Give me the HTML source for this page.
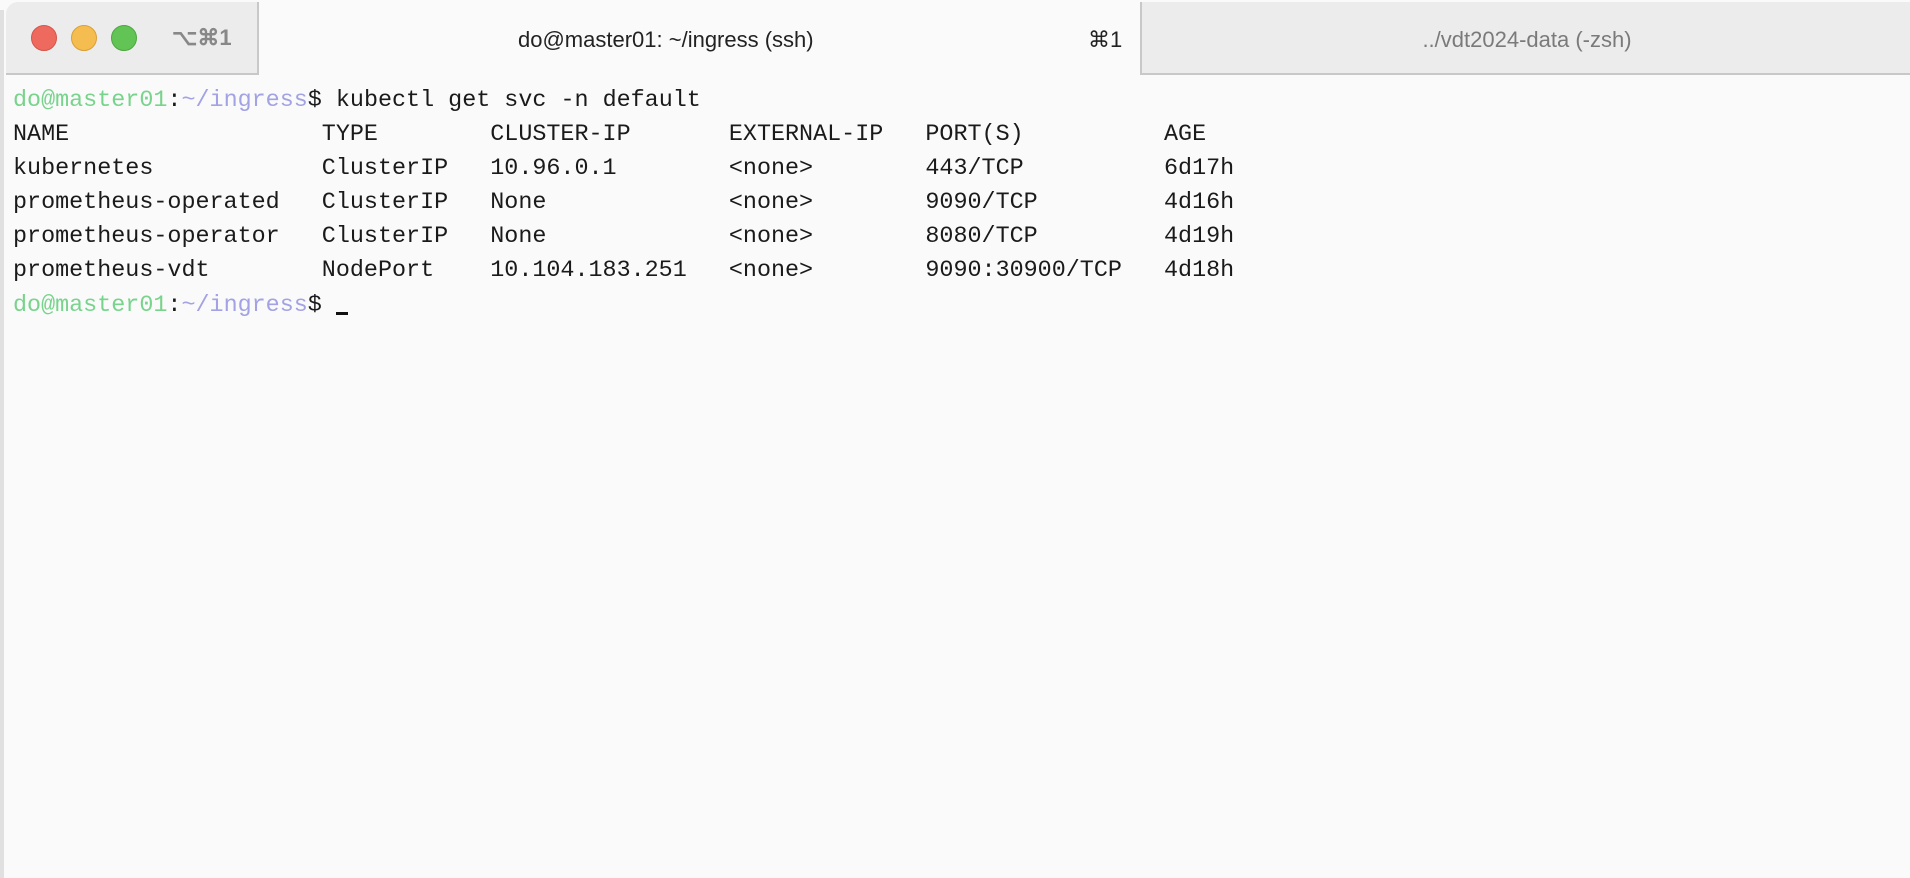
<!DOCTYPE html>
<html><head><style>
body{margin:0;width:1910px;height:878px;background:#fafafa;overflow:hidden;position:relative;font-family:"Liberation Sans",sans-serif}
.bar{position:absolute;left:0;top:0;width:1910px;height:75px}
.lt{position:absolute;left:6px;top:2px;width:251px;height:71px;background:#ececec;border-right:2px solid #c8c8c8;border-bottom:2px solid #c8c8c8;border-top-left-radius:12px}
.rt{position:absolute;left:1140px;top:2px;width:770px;height:71px;background:#ececec;border-left:2px solid #c8c8c8;border-bottom:2px solid #c8c8c8;color:#7a7a7a;font-size:22px;text-align:center;line-height:76px}
.dot{position:absolute;top:25px;width:24px;height:24px;border-radius:50%}
.t{position:absolute;font-size:22px;color:#222}
.edge{position:absolute;left:0;top:10px;width:4px;height:868px;background:#e0e0e0}
pre{position:absolute;left:13px;top:84px;margin:0;font-family:"Liberation Mono",monospace;font-size:23.4px;line-height:34.1px;color:#1a1a1a}
.g{color:#78d48c}.p{color:#a2a2e4}
.cur{display:inline-block;width:12px;height:3px;background:#111;vertical-align:-4px}
</style></head><body>
<div class="edge"></div>
<div class="bar">
<div class="lt"></div>
<div class="dot" style="left:31px;background:#ee6a5f;border:1px solid #d65448"></div>
<div class="dot" style="left:71px;background:#f5bd4f;border:1px solid #d9a033"></div>
<div class="dot" style="left:111px;background:#61c454;border:1px solid #4ca73f"></div>
<div class="t" style="left:172px;top:25px;color:#888;font-weight:bold">⌥⌘1</div>
<div class="t" style="left:518px;top:27px">do@master01: ~/ingress (ssh)</div>
<div class="t" style="left:1088px;top:27px">⌘1</div>
<div class="rt">../vdt2024-data (-zsh)</div>
</div>
<pre><span class="g">do@master01</span>:<span class="p">~/ingress</span>$ kubectl get svc -n default
NAME                  TYPE        CLUSTER-IP       EXTERNAL-IP   PORT(S)          AGE
kubernetes            ClusterIP   10.96.0.1        &lt;none&gt;        443/TCP          6d17h
prometheus-operated   ClusterIP   None             &lt;none&gt;        9090/TCP         4d16h
prometheus-operator   ClusterIP   None             &lt;none&gt;        8080/TCP         4d19h
prometheus-vdt        NodePort    10.104.183.251   &lt;none&gt;        9090:30900/TCP   4d18h
<span class="g">do@master01</span>:<span class="p">~/ingress</span>$ <span class="cur"></span></pre>
</body></html>
